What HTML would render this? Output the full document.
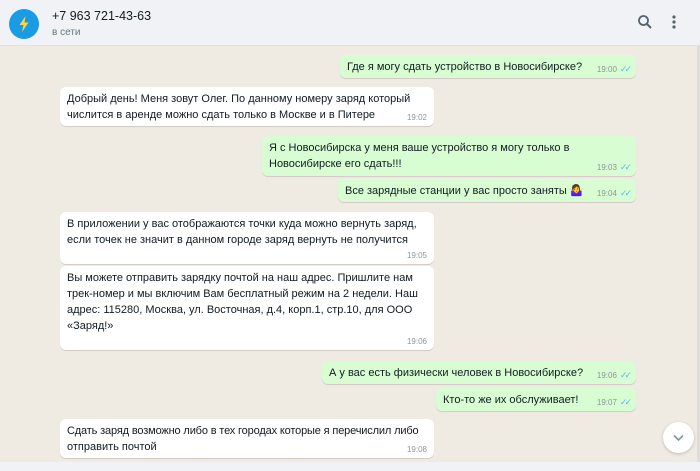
<!DOCTYPE html>
<html><head><meta charset="utf-8"><style>
*{margin:0;padding:0;box-sizing:border-box}
body{width:700px;height:471px;overflow:hidden;background:#efeae2;font-family:"Liberation Sans","DejaVu Sans",sans-serif;position:relative;color:#111b21}
.hdr{position:absolute;left:0;top:0;width:700px;height:46px;background:#f0f2f5;border-bottom:1px solid #e2e2e2}
.av{position:absolute;left:9px;top:9px;width:30px;height:30px;border-radius:50%;background:#1a9be6}
.name{position:absolute;left:52px;top:9px;font-size:12.5px;color:#111b21}
.st{position:absolute;left:52px;top:27px;font-size:10px;color:#667781}
.b{position:absolute;border-radius:6px;font-size:11px;line-height:16px;padding:4px 7px;box-shadow:0 1px 0.5px rgba(0,0,0,.13);white-space:nowrap}
.o{background:#d9fdd3}.i{background:#fff}
.t{position:absolute;right:7px;bottom:3px;font-size:8px;color:#8a9599;line-height:10px}
.ck{color:#53bdeb;margin-left:3px;font-size:9px;letter-spacing:-3px}
.bot{position:absolute;left:0;top:462px;width:700px;height:9px;background:#f0f2f5}
.sb{position:absolute;left:697px;top:46px;width:3px;height:416px;background:#ddd}
.down{position:absolute;left:663px;top:422px;width:31px;height:31px;border-radius:50%;background:#fff;box-shadow:0 1px 3px rgba(0,0,0,.2)}
</style></head><body>
<div class="hdr">
<div class="av"><svg width="30" height="30" viewBox="0 0 30 30"><path d="M16.5 7 L10.5 16 H14.5 L13 23 L19.5 13.5 H15.5 Z" fill="#ffd43b"/></svg></div>
<div class="name">+7 963 721-43-63</div>
<div class="st">в сети</div>
<svg style="position:absolute;left:637px;top:14px" width="16" height="16" viewBox="0 0 16 16"><circle cx="6.5" cy="6.5" r="4.5" fill="none" stroke="#54656f" stroke-width="1.8"/><path d="M10 10 L14 14" stroke="#54656f" stroke-width="2"/></svg>
<svg style="position:absolute;left:671px;top:14px" width="6" height="16" viewBox="0 0 6 16"><circle cx="3" cy="3" r="1.6" fill="#54656f"/><circle cx="3" cy="8" r="1.6" fill="#54656f"/><circle cx="3" cy="13" r="1.6" fill="#54656f"/></svg>
</div>
<div class="sb"></div>

<div class="b o" style="left:340px;top:55px;width:296px;height:23px">Где я могу сдать устройство в Новосибирске?<span class="t">19:00<span class="ck">✓✓</span></span></div>

<div class="b i" style="left:60px;top:87px;width:374px;height:39px">Добрый день! Меня зовут Олег. По данному номеру заряд который<br>числится в аренде можно сдать только в Москве и в Питере<span class="t">19:02</span></div>

<div class="b o" style="left:262px;top:136px;width:374px;height:40px">Я с Новосибирска у меня ваше устройство я могу только в<br>Новосибирске его сдать!!!<span class="t">19:03<span class="ck">✓✓</span></span></div>

<div class="b o" style="left:338px;top:179px;width:298px;height:23px">Все зарядные станции у вас просто заняты 🤷‍♀️<span class="t">19:04<span class="ck">✓✓</span></span></div>

<div class="b i" style="left:60px;top:212px;width:374px;height:52px">В приложении у вас отображаются точки куда можно вернуть заряд,<br>если точек не значит в данном городе заряд вернуть не получится<span class="t">19:05</span></div>

<div class="b i" style="left:60px;top:266px;width:374px;height:84px">Вы можете отправить зарядку почтой на наш адрес. Пришлите нам<br>трек-номер и мы включим Вам бесплатный режим на 2 недели. Наш<br>адрес: 115280, Москва, ул. Восточная, д.4, корп.1, стр.10, для ООО<br>«Заряд!»<span class="t">19:06</span></div>

<div class="b o" style="left:322px;top:361px;width:314px;height:23px">А у вас есть физически человек в Новосибирске?<span class="t">19:06<span class="ck">✓✓</span></span></div>

<div class="b o" style="left:436px;top:388px;width:200px;height:23px">Кто-то же их обслуживает!<span class="t">19:07<span class="ck">✓✓</span></span></div>

<div class="b i" style="left:60px;top:419px;width:374px;height:39px"><span style="letter-spacing:-0.15px">Сдать заряд возможно либо в тех городах которые я перечислил либо</span><br>отправить почтой<span class="t">19:08</span></div>

<div class="down"><svg width="31" height="31" viewBox="0 0 31 31"><path d="M11 13.5 L15.5 18 L20 13.5" fill="none" stroke="#8696a0" stroke-width="1.6"/></svg></div>
<div class="bot"></div>
</body></html>
